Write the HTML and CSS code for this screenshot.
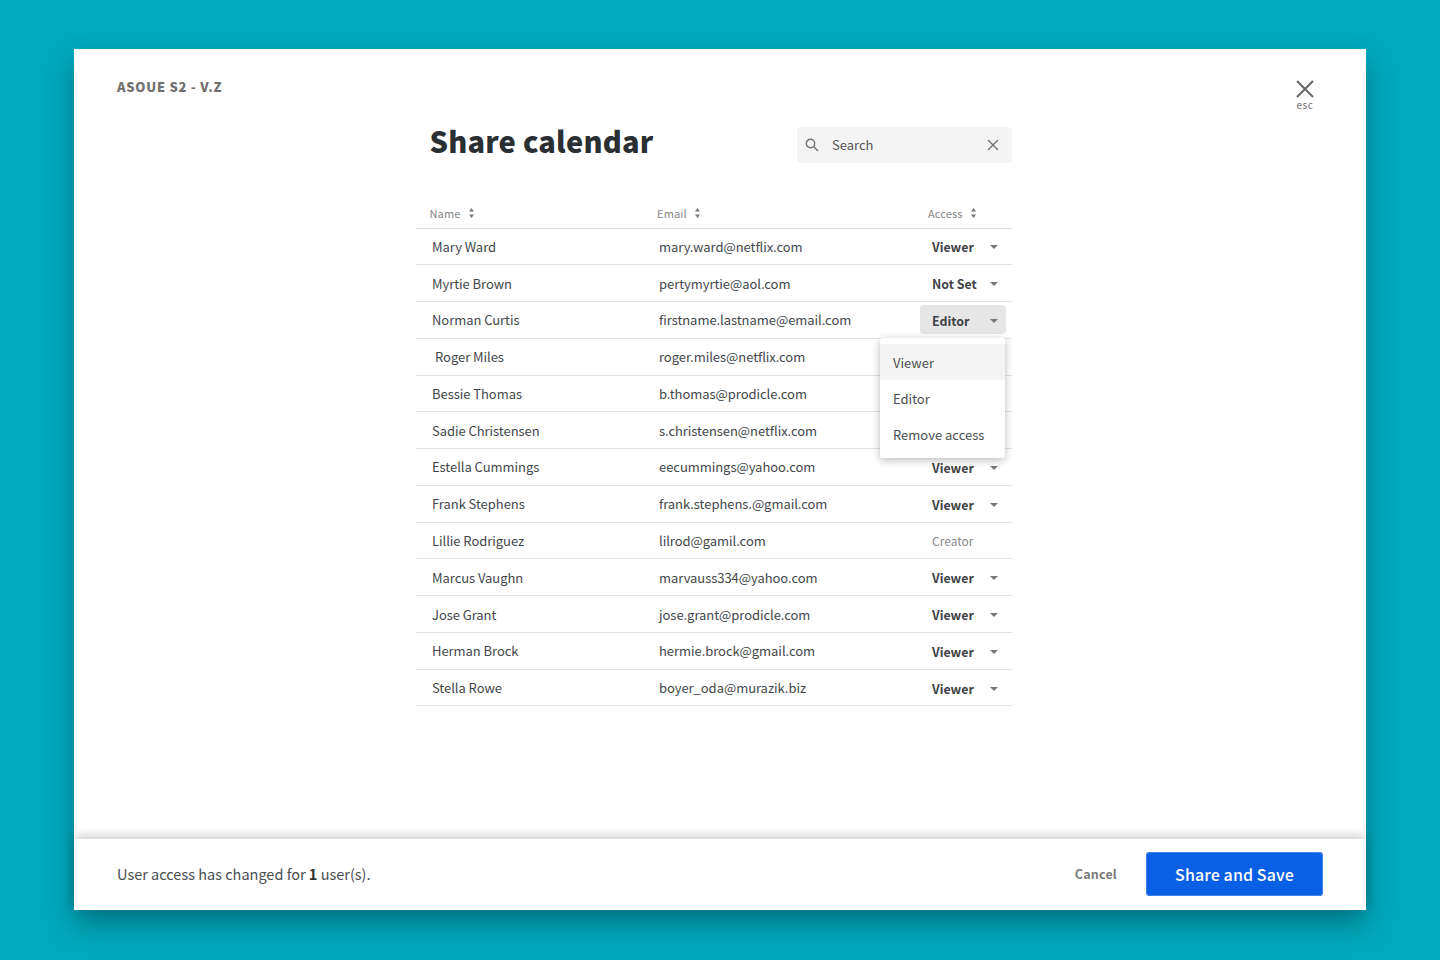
FILE: index.html
```html
<!DOCTYPE html>
<html lang="en">
<head>
<meta charset="utf-8">
<title>Share calendar</title>
<link rel="stylesheet" href="styles.css">
</head>
<body>
<svg class="defs" width="0" height="0" aria-hidden="true">
  <symbol id="sort" viewBox="0 0 5 10"><path d="M2.5 0 5 3.5H0ZM2.5 10 0 6.5H5Z"/></symbol>
  <symbol id="caret" viewBox="0 0 8 4"><path d="M0 0H8L4 4Z"/></symbol>
</svg>
<main class="modal">
  <div class="body">
    <header class="top">
      <div class="brand">ASOUE S2 - V.Z</div>
      <button class="close">
        <svg class="close-icon" viewBox="0 0 18 18"><path d="M1 1 17 17M17 1 1 17"/></svg>
        <span class="esc">esc</span>
      </button>
    </header>
    <section class="content">
      <div class="title-row">
        <h1 class="title">Share calendar</h1>
        <div class="search">
          <svg class="search-icon" viewBox="0 0 14 14"><circle cx="5.5" cy="5.5" r="4.2"/><path d="M8.6 8.6 13 13"/></svg>
          <span class="search-text">Search</span>
          <svg class="search-clear" viewBox="0 0 12 12"><path d="M1 1 11 11M11 1 1 11"/></svg>
        </div>
      </div>
      <div class="thead">
        <div class="th">Name <svg class="sort"><use href="#sort"/></svg></div>
        <div class="th">Email <svg class="sort"><use href="#sort"/></svg></div>
        <div class="th">Access <svg class="sort"><use href="#sort"/></svg></div>
      </div>
      <div class="row"><div class="name">Mary Ward</div><div>mary.ward@netflix.com</div><div class="access"><span>Viewer</span><svg class="caret"><use href="#caret"/></svg></div></div>
      <div class="row"><div class="name">Myrtie Brown</div><div>pertymyrtie@aol.com</div><div class="access"><span>Not Set</span><svg class="caret"><use href="#caret"/></svg></div></div>
      <div class="row"><div class="name">Norman Curtis</div><div>firstname.lastname@email.com</div><div class="access open"><span>Editor</span><svg class="caret"><use href="#caret"/></svg></div>
        <ul class="menu">
          <li class="menu-item active">Viewer</li>
          <li class="menu-item">Editor</li>
          <li class="menu-item">Remove access</li>
        </ul>
      </div>
      <div class="row"><div class="name indent">Roger Miles</div><div>roger.miles@netflix.com</div><div class="access"></div></div>
      <div class="row"><div class="name">Bessie Thomas</div><div>b.thomas@prodicle.com</div><div class="access"></div></div>
      <div class="row"><div class="name">Sadie Christensen</div><div>s.christensen@netflix.com</div><div class="access"></div></div>
      <div class="row"><div class="name">Estella Cummings</div><div>eecummings@yahoo.com</div><div class="access"><span>Viewer</span><svg class="caret"><use href="#caret"/></svg></div></div>
      <div class="row"><div class="name">Frank Stephens</div><div>frank.stephens.@gmail.com</div><div class="access"><span>Viewer</span><svg class="caret"><use href="#caret"/></svg></div></div>
      <div class="row"><div class="name">Lillie Rodriguez</div><div>lilrod@gamil.com</div><div class="access creator"><span>Creator</span></div></div>
      <div class="row"><div class="name">Marcus Vaughn</div><div>marvauss334@yahoo.com</div><div class="access"><span>Viewer</span><svg class="caret"><use href="#caret"/></svg></div></div>
      <div class="row"><div class="name">Jose Grant</div><div>jose.grant@prodicle.com</div><div class="access"><span>Viewer</span><svg class="caret"><use href="#caret"/></svg></div></div>
      <div class="row"><div class="name">Herman Brock</div><div>hermie.brock@gmail.com</div><div class="access"><span>Viewer</span><svg class="caret"><use href="#caret"/></svg></div></div>
      <div class="row"><div class="name">Stella Rowe</div><div>boyer_oda@murazik.biz</div><div class="access"><span>Viewer</span><svg class="caret"><use href="#caret"/></svg></div></div>
    </section>
  </div>
  <footer class="footer">
    <p class="status">User access has changed for <b>1</b> user(s).</p>
    <div class="actions">
      <button class="cancel">Cancel</button>
      <button class="save">Share and Save</button>
    </div>
  </footer>
</main>
</body>
</html>
```

FILE: styles.css
```css
* { box-sizing: border-box; }
html, body { height: 100%; }
body {
  margin: 0;
  padding: 49px 74px 50px;
  background: #00a9bd;
  font-family: "Noto Sans CJK SC", "Noto Sans", sans-serif;
  color: #3c4043;
  overflow: hidden;
}
.defs { position: absolute; }
button { font-family: inherit; border: 0; background: none; padding: 0; }

.modal {
  height: 861px;
  display: flex;
  flex-direction: column;
  background: #fff;
  box-shadow: 0 14px 28px rgba(0, 0, 0, .3);
}
.body { flex: 1; min-height: 0; }

.top {
  height: 78px;
  display: flex;
  justify-content: space-between;
  align-items: flex-start;
  padding: 28px 52px 0 43px;
}
.brand {
  font-size: 13px;
  line-height: 20px;
  font-weight: 900;
  letter-spacing: .72px;
  color: #707070;
}
.close {
  display: flex;
  flex-direction: column;
  align-items: center;
  margin-top: 3px;
}
.close-icon { width: 18px; height: 18px; fill: none; stroke: #666; stroke-width: 2; }
.esc { font-size: 10px; line-height: 12px; letter-spacing: .5px; color: #6e6e6e; margin-top: 1px; }

.content { width: 596px; margin-left: 342px; }
.title-row {
  height: 36px;
  display: flex;
  justify-content: space-between;
  align-items: flex-start;
  padding-left: 13.5px;
  margin-bottom: 35px;
}
.title {
  margin: -2px 0 0;
  font-size: 29px;
  line-height: 30px;
  font-weight: 900;
  letter-spacing: .2px;
  color: #2a2f34;
}
.search {
  width: 215.5px;
  height: 36px;
  display: flex;
  align-items: center;
  padding: 0 13px 0 8px;
  border-radius: 4px;
  background: #f4f4f4;
}
.search-icon { width: 14px; height: 14px; fill: none; stroke: #707070; stroke-width: 1.4; }
.search-text { flex: 1; margin-left: 13.5px; font-size: 13px; line-height: 20px; color: #555; }
.search-clear { width: 12px; height: 12px; fill: none; stroke: #6e6e6e; stroke-width: 1.3; }

.thead {
  height: 30.5px;
  display: grid;
  grid-template-columns: 227.5px 271px 1fr;
  align-items: center;
  padding-left: 13.5px;
  border-bottom: 1px solid #dcdcdc;
}
.th { font-size: 11px; line-height: 16px; letter-spacing: .15px; color: #858585; display: flex; align-items: center; }
.sort { width: 5px; height: 10px; margin-left: 8.5px; fill: #777; }

.row {
  position: relative;
  height: 36.77px;
  display: grid;
  grid-template-columns: 243px 261px 86px;
  align-items: center;
  border-bottom: 1px solid #e4e4e4;
  font-size: 13px;
  letter-spacing: -.05px;
  color: #42474b;
}
.name { padding-left: 16px; }
.name.indent { padding-left: 19px; }
.access {
  height: 29px;
  display: flex;
  justify-content: space-between;
  align-items: center;
  padding: 2px 8px 0 12px;
  font-size: 12.4px;
  letter-spacing: 0;
  font-weight: 600;
  color: #3e4246;
  border-radius: 4px;
}
.access.open { background: #e6e6e6; }
.access.creator { padding-top: 0; font-weight: 400; font-size: 12px; color: #8a8a8a; }
.caret { width: 8px; height: 4px; fill: #777; }

.menu {
  position: absolute;
  z-index: 2;
  top: 100%;
  right: 7px;
  width: 125px;
  height: 120px;
  margin: 0;
  padding: 6px 0;
  list-style: none;
  background: #fff;
  border-radius: 2px;
  box-shadow: 0 2px 8px rgba(0, 0, 0, .28);
  font-weight: 400;
}
.menu-item { height: 36px; line-height: 36px; padding: 1px 0 0 13px; font-size: 13px; letter-spacing: 0; color: #4a4e52; }
.menu-item.active { background: #f4f4f4; }

.footer {
  position: relative;
  height: 71px;
  display: flex;
  justify-content: space-between;
  align-items: center;
  padding: 0 43px 2px;
  background: #fff;
  box-shadow: 0 -3px 10px rgba(0, 0, 0, .2);
}
.status { margin: 0; font-size: 14.5px; line-height: 22px; color: #4a4e52; }
.status b { font-weight: 700; color: #2c3033; }
.actions { display: flex; align-items: center; gap: 29px; }
.cancel { font-size: 12.5px; line-height: 20px; font-weight: 600; letter-spacing: .2px; color: #7a7a7a; }
.save {
  width: 177px;
  height: 44px;
  border-radius: 4px;
  background: #0a60e4;
  box-shadow: inset 0 0 0 1px #3b82ec;
  color: #fff;
  font-size: 16px;
  line-height: 22px;
  font-weight: 500;
  letter-spacing: .1px;
}
```
